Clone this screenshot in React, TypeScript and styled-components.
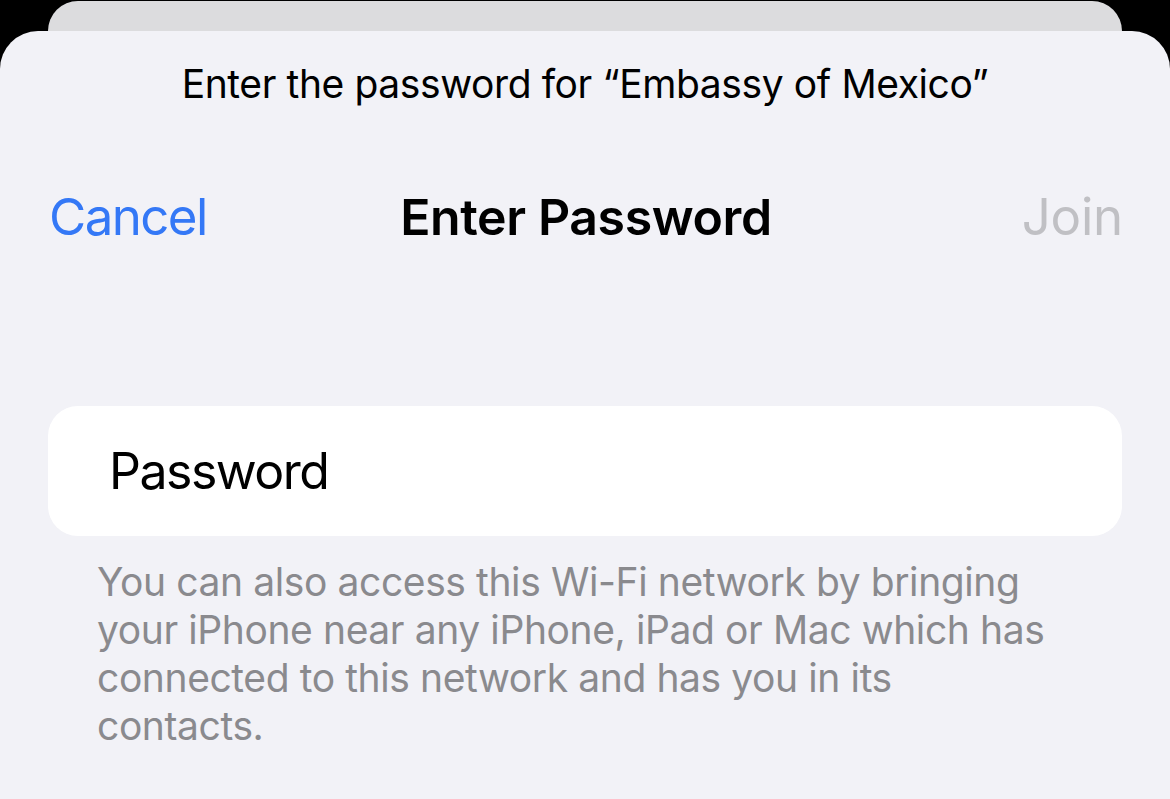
import React from 'react';
import styled, { createGlobalStyle } from 'styled-components';

const GlobalStyle = createGlobalStyle`
  html, body {
    margin: 0;
    padding: 0;
    background: #000;
    overflow: hidden;
  }
  body {
    font-family: Inter, "Noto Sans", "Liberation Sans", sans-serif;
    -webkit-font-smoothing: antialiased;
  }
`;

const Screen = styled.div`
  width: 1170px;
  height: 799px;
  display: flex;
  flex-direction: column;
  padding-top: 1px;
  box-sizing: border-box;
  background: #000;
`;

const BackCard = styled.div`
  height: 30px;
  margin: 0 48px;
  background: #dcdcde;
  border-radius: 32px 32px 0 0;
  flex-shrink: 0;
`;

const Sheet = styled.div`
  flex: 1;
  background: #f2f2f7;
  border-radius: 38px 38px 0 0;
  display: flex;
  flex-direction: column;
`;

const Prompt = styled.div`
  margin-top: 29px;
  height: 48px;
  line-height: 48px;
  text-align: center;
  font-size: 39px;
  letter-spacing: -0.4px;
  color: #000;
`;

const NavBar = styled.div`
  margin-top: 78px;
  height: 60px;
  padding: 0 47px 0 49px;
  display: grid;
  grid-template-columns: 1fr auto 1fr;
  align-items: center;
`;

const NavButton = styled.span<{ $disabled?: boolean; $align?: 'left' | 'right'; $tight?: boolean }>`
  font-size: 51px;
  letter-spacing: ${(p) => (p.$tight ? '-1.6px' : '-0.2px')};
  color: ${(p) => (p.$disabled ? '#c0c0c4' : '#3478f6')};
  justify-self: ${(p) => (p.$align === 'right' ? 'end' : 'start')};
`;

const Title = styled.span`
  font-size: 50px;
  font-weight: 600;
  letter-spacing: -0.4px;
  color: #000;
`;

const Field = styled.div`
  margin: 160px 48px 0;
  height: 130px;
  background: #fff;
  border-radius: 30px;
  display: flex;
  align-items: center;
  padding-left: 61px;
`;

const FieldLabel = styled.span`
  font-size: 50px;
  letter-spacing: -1.5px;
  color: #000;
`;

const Footnote = styled.p`
  margin: 22px 48px 0;
  padding: 0 67px 0 49px;
  font-size: 39px;
  line-height: 48px;
  letter-spacing: -0.4px;
  color: #8a8a8e;
`;

export default function App() {
  return (
    <>
      <GlobalStyle />
      <Screen>
        <BackCard />
        <Sheet>
          <Prompt>Enter the password for “Embassy of Mexico”</Prompt>
          <NavBar>
            <NavButton $align="left" $tight>Cancel</NavButton>
            <Title>Enter Password</Title>
            <NavButton $disabled $align="right">Join</NavButton>
          </NavBar>
          <Field>
            <FieldLabel>Password</FieldLabel>
          </Field>
          <Footnote>
            You can also access this Wi-Fi network by bringing your iPhone near any iPhone, iPad or
            Mac which has connected to this network and has you in its contacts.
          </Footnote>
        </Sheet>
      </Screen>
    </>
  );
}
